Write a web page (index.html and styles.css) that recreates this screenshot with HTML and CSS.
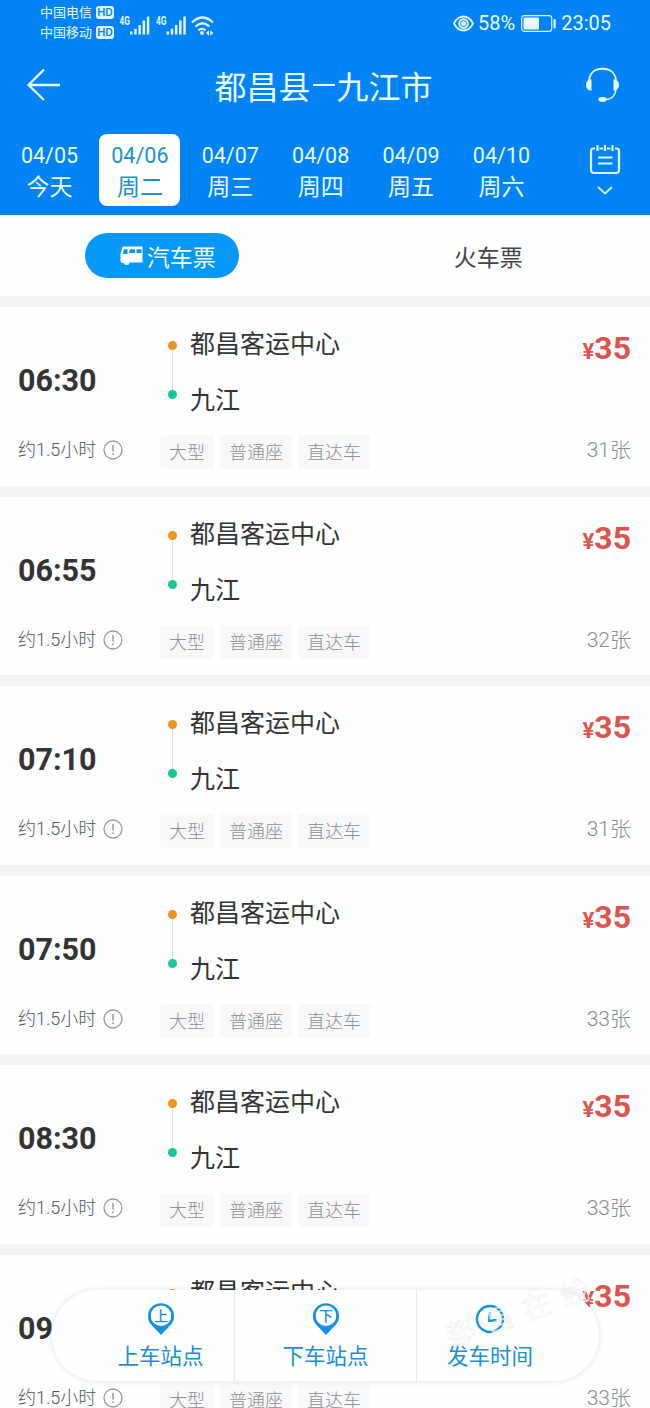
FILE: index.html
```html
<!DOCTYPE html>
<html lang="zh-CN">
<head>
  <meta charset="UTF-8">
  <meta name="viewport" content="width=device-width, initial-scale=1.0">
  <title>都昌县–九江市</title>
  <link rel="stylesheet" href="styles.css">
</head>
<body>

<div class="header">
  <!-- 状态栏 -->
  <div class="status-bar">
    <div class="carriers">
      <div class="carrier">中国电信<span class="hd">HD</span></div>
      <div class="carrier">中国移动<span class="hd">HD</span></div>
    </div>
    <svg class="signals" width="96" height="24" viewBox="0 0 96 24" fill="#dff6ff">
      <text x="0.500" y="11" class="net" textLength="10.500" lengthAdjust="spacingAndGlyphs">4G</text>
      <path d="M11 17.500h2.500v3h-2.500zM15.200 14.800h2.500v5.700h-2.500zM19.400 11h2.500v9.500h-2.500zM23.600 6.500h2.500v14h-2.500zM27.800 2.500h2.500v18h-2.500z"/>
      <text x="37" y="11" class="net" textLength="10.500" lengthAdjust="spacingAndGlyphs">4G</text>
      <path d="M47.500 17.500h2.500v3h-2.500zM51.700 14.800h2.500v5.700h-2.500zM55.900 11h2.500v9.500h-2.500zM60.100 6.500h2.500v14h-2.500zM64.300 2.500h2.500v18h-2.500z"/>
      <g fill="none" stroke="#dff6ff" stroke-width="2.200">
        <path d="M73 8.500q10.500-10 21 0"/>
        <path d="M76.500 12.500q7-6.500 14 0"/>
        <path d="M79.500 16.300q3.500-3 7 0"/>
      </g>
      <circle cx="83" cy="19" r="1.900"/>
      <path d="M90 16.300v5.500l-3-2.700zM91.300 16.300v5.500l3-2.700z"/>
    </svg>
    <div class="status-right">
      <svg width="21" height="17" viewBox="0 0 21 17" fill="none" stroke="#dff6ff" stroke-width="1.900">
        <path d="M1 8.500Q4.500 1.500 10.500 1.500T20 8.500Q16.500 15.500 10.500 15.500T1 8.500z"/>
        <circle cx="10.500" cy="8.500" r="4.300"/>
        <circle cx="10.500" cy="8.500" r="2.600" fill="#dff6ff" stroke="none"/>
      </svg>
      <span class="percent">58%</span>
      <svg width="36" height="17" viewBox="0 0 36 17">
        <rect x="0.700" y="0.700" width="30" height="15.600" rx="2.500" fill="none" stroke="#dff6ff" stroke-width="1.200"/>
        <rect x="2.500" y="2.500" width="15.500" height="12" rx="1" fill="#e8f5ff"/>
        <rect x="32.500" y="4" width="2.200" height="9.500" rx="1" fill="#dff6ff"/>
      </svg>
      <span class="clock">23:05</span>
    </div>
  </div>

  <div class="nav-bar">
    <svg width="36" height="34" viewBox="0 0 36 34" fill="none" stroke="#e4fbff" stroke-width="2.300">
      <path d="M34 17H2M18 1.500L2.500 17L18 32"/>
    </svg>
    <h1 class="title">都昌县<span class="dash"></span>九江市</h1>
    <svg width="36" height="36" viewBox="0 0 36 36" fill="none" stroke="#e4fbff" stroke-width="1.900">
      <path d="M4 14C4.500 5.500 10.500 1.800 17.500 1.800S30.500 5.500 31 14"/>
      <path d="M31 22C30.500 29 26 32.500 20 32.500" stroke-width="1.400"/>
      <path d="M6.500 12.500v11C3 23.500 1 21.500 1 18s2-5.500 5.500-5.500zM28.500 12.500v11c3.500 0 5.500-2 5.500-5.500s-2-5.500-5.500-5.500z" fill="#e4fbff" stroke="none"/>
      <ellipse cx="17.500" cy="32.500" rx="4.200" ry="2.400" fill="#e4fbff" stroke="none"/>
    </svg>
  </div>

  <div class="date-bar">
    <div class="date">04/05<span>今天</span></div>
    <div class="date active">04/06<span>周二</span></div>
    <div class="date">04/07<span>周三</span></div>
    <div class="date">04/08<span>周四</span></div>
    <div class="date">04/09<span>周五</span></div>
    <div class="date">04/10<span>周六</span></div>
    <div class="calendar">
      <svg width="32" height="52" viewBox="0 0 32 52" fill="none" stroke="#d9f8ff" stroke-width="2.200">
        <path d="M6 4.500H4.500Q2 4.500 2 7V26Q2 29 5 29H27Q30 29 30 26V7Q30 4.500 27.500 4.500H26M10.500 4.500H14M18 4.500H21.500"/>
        <path d="M8.500 1v6M16 1v6M23.500 1v6M9 13.500h14.500M9 19.500h14.500"/>
        <path d="M9 43l7 6.500l7-6.500" stroke-width="1.800"/>
      </svg>
    </div>
  </div>
</div>

<div class="tabs">
  <div class="tab">
    <div class="tab-active">
      <svg width="23" height="19" viewBox="0 0 23 19">
        <path d="M3.500 0.500H22.500V16.500H9.500A2.700 2.200 0 0 1 4 17H2Q0.500 17 0.500 15V8L2 2Q2.300 0.500 3.500 0.500z" fill="#fff"/>
        <path d="M4 3.300H7.500V8H3zM10 3.300H15V7H9zM16.500 3.300H21.500V7H16.500z" fill="#0a95f7"/>
      </svg>
      汽车票
    </div>
  </div>
  <div class="tab train">火车票</div>
</div>

<div class="list" id="list"></div>

<!-- 底部筛选 -->
<div class="filter-bar">
  <div class="filter">
    <svg width="28" height="34" viewBox="0 0 28 34">
      <path d="M14 33L4.500 23A13 13 0 1 1 23.500 23z" fill="#1292e2"/>
      <circle cx="14" cy="13.800" r="10.300" fill="#fff"/>
      <text x="14" y="18.800" class="pin-text">上</text>
    </svg>
    上车站点
  </div>
  <div class="filter">
    <svg width="28" height="34" viewBox="0 0 28 34">
      <path d="M14 33L4.500 23A13 13 0 1 1 23.500 23z" fill="#1292e2"/>
      <circle cx="14" cy="13.800" r="10.300" fill="#fff"/>
      <text x="14" y="18.800" class="pin-text">下</text>
    </svg>
    下车站点
  </div>
  <div class="filter">
    <svg width="30" height="34" viewBox="0 0 30 34" fill="none" stroke="#1292e2" stroke-width="2.400">
      <circle cx="15" cy="17" r="13"/>
      <path d="M14.500 10.500V18.500H21.500" stroke-width="2.800"/>
    </svg>
    发车时间
  </div>
</div>

<div class="watermark"><span>都</span><span>昌</span><span>在</span><span>线</span></div>

<script>
  const trips = [
    { time: '06:30', left: 31 },
    { time: '06:55', left: 32 },
    { time: '07:10', left: 31 },
    { time: '07:50', left: 33 },
    { time: '08:30', left: 33 },
    { time: '09', left: 33 }
  ];

  document.getElementById('list').innerHTML = trips.map(trip => `
    <div class="card">
      <div class="depart">
        <div class="time">${trip.time}</div>
        <div class="duration">约1.5小时
          <svg width="20" height="20" viewBox="0 0 20 20" fill="none" stroke="#999">
            <circle cx="10" cy="10" r="9" stroke-width="1.300"/>
            <path d="M10 5v6.500M10 13.300v1.700" stroke-width="1.500"/>
          </svg>
        </div>
      </div>
      <div class="route">
        <div class="stops">
          <div class="line"><i class="dot from"></i><i class="link"></i><i class="dot to"></i></div>
          <div class="names"><div>都昌客运中心</div><div>九江</div></div>
        </div>
        <div class="tags"><span>大型</span><span>普通座</span><span>直达车</span></div>
      </div>
      <div class="fare">
        <div class="price"><small>¥</small>35</div>
        <div class="left">${trip.left}张</div>
      </div>
    </div>`).join('');
</script>

</body>
</html>
```
FILE: styles.css
```css
* {
  box-sizing: border-box;
}

body {
  margin: 0;
  height: 1408px;
  overflow: hidden;
  position: relative;
  background: #f2f3f5;
  font-family: Roboto, "Noto Sans CJK SC", sans-serif;
  color: #333;
}

svg {
  display: block;
  flex: none;
}

.header {
  height: 215px;
  background: #0283f5;
  color: #e6fcff;
}

.status-bar {
  height: 45px;
  padding: 3px 39px 0 40px;
  display: flex;
  align-items: flex-start;
}

.carriers {
  width: 79px;
  flex: none;
}

.carrier {
  display: flex;
  align-items: center;
  height: 19.500px;
  font-size: 13px;
  line-height: 17px;
  white-space: nowrap;
}

.hd {
  margin-left: 4px;
  width: 18px;
  height: 13px;
  border-radius: 3px;
  background: #dff6ff;
  color: #0283f5;
  font-size: 11.500px;
  font-weight: 500;
  line-height: 13px;
  text-align: center;
}

.signals {
  margin-top: 11px;
}

.net {
  font-size: 12px;
  font-weight: 700;
  font-family: Roboto, sans-serif;
}

.status-right {
  margin-left: auto;
  margin-top: 8px;
  display: flex;
  align-items: center;
  height: 24px;
  font-size: 20px;
}

.percent {
  margin: 0 6px 0 4px;
}

.clock {
  margin-left: 4px;
}

.nav-bar {
  height: 80px;
  padding: 0 29px 0 26px;
  display: flex;
  align-items: center;
  justify-content: space-between;
}

.title {
  margin: 0;
  display: flex;
  align-items: center;
  font-size: 32px;
  font-weight: 400;
}

.dash {
  width: 22px;
  height: 2px;
  margin: 0 2px;
  background: #e6fcff;
}

.date-bar {
  height: 90px;
  padding: 9px 0 0 9px;
  display: flex;
}

.date {
  width: 81px;
  height: 72px;
  margin-right: 9.400px;
  padding-top: 7px;
  flex: none;
  border-radius: 8px;
  font-size: 21.500px;
  line-height: 30px;
  text-align: center;
}

.date span {
  display: block;
  font-size: 23px;
  line-height: 33px;
}

.date.active {
  background: #fff;
  color: #1a93d0;
}

.calendar {
  margin: 10px 0 0 38px;
}

.tabs {
  height: 81px;
  display: flex;
  align-items: center;
  background: #fdfefe;
  font-size: 23px;
  color: #444;
}

.tab {
  flex: 1;
  display: flex;
  justify-content: center;
}

.train {
  padding-left: 3px;
}

.tab-active {
  width: 154px;
  height: 45px;
  padding-left: 12px;
  display: flex;
  align-items: center;
  justify-content: center;
  gap: 4px;
  border-radius: 23px;
  background: #0598fb;
  color: #eefdff;
}

.list {
  padding-top: 11px;
}

.card {
  height: 178.500px;
  margin-bottom: 11px;
  padding: 0 19px 0 18px;
  display: flex;
  background: #fdfefe;
}

.depart {
  width: 142px;
  flex: none;
}

.time {
  margin-top: 54px;
  font-size: 30.500px;
  font-weight: 700;
  line-height: 40px;
}

.duration {
  margin-top: 36px;
  display: flex;
  align-items: center;
  gap: 7px;
  font-size: 18px;
  line-height: 26px;
  font-weight: 300;
  color: #555;
}

.route {
  flex: 1;
}

.stops {
  display: flex;
  padding-left: 8px;
}

.line {
  width: 9px;
  padding-top: 34px;
  display: flex;
  flex-direction: column;
  align-items: center;
}

.dot {
  width: 9px;
  height: 9px;
  border-radius: 50%;
}

.from {
  background: #ea941d;
}

.to {
  background: #18c795;
}

.link {
  width: 1px;
  height: 40px;
  background: #e2e2e2;
}

.names {
  margin-left: 13px;
  padding-top: 10px;
  font-size: 25px;
  line-height: 56px;
}

.tags {
  display: flex;
  gap: 6px;
  margin-top: 6px;
}

.tags span {
  height: 34px;
  padding: 0 9px;
  border-radius: 3px;
  background: #f7f8fa;
  color: #8f8f8f;
  font-size: 18px;
  line-height: 35px;
  font-weight: 300;
}

.fare {
  text-align: right;
}

.price {
  margin-top: 21px;
  font-size: 32px;
  font-weight: 700;
  line-height: 40px;
  color: #dc5450;
}

.price small {
  font-size: 22px;
}

.left {
  margin-top: 62px;
  font-size: 21px;
  line-height: 32px;
  font-weight: 300;
  color: #8c8c8c;
}

.filter-bar {
  position: absolute;
  left: 52px;
  top: 1290px;
  width: 547px;
  height: 91px;
  display: flex;
  border-radius: 46px;
  background: #fdfefe;
  box-shadow: 0 0 6px rgba(0, 0, 0, 0.12);
  color: #1c8fcf;
  font-size: 21.500px;
  line-height: 32px;
}

.filter {
  width: 182px;
  flex: none;
  display: flex;
  flex-direction: column;
  align-items: center;
  padding-top: 12px;
}

.filter svg {
  margin-bottom: 5px;
}

.filter:first-child {
  padding-left: 35px;
}

.filter:last-child {
  padding-right: 35px;
}

.filter + .filter {
  border-left: 1px solid #e8eaec;
}

.pin-text {
  font-size: 14px;
  font-weight: 500;
  text-anchor: middle;
  fill: #1292e2;
}

.watermark {
  position: absolute;
  left: 443px;
  top: 1294px;
  display: flex;
  gap: 12px;
  transform: rotate(-19deg);
  font-family: "Noto Sans CJK SC", sans-serif;
  font-size: 28px;
  line-height: 34px;
  color: rgba(255, 255, 255, 0.7);
  -webkit-text-stroke: 0.500px rgba(190, 195, 200, 0.400);
}
```
